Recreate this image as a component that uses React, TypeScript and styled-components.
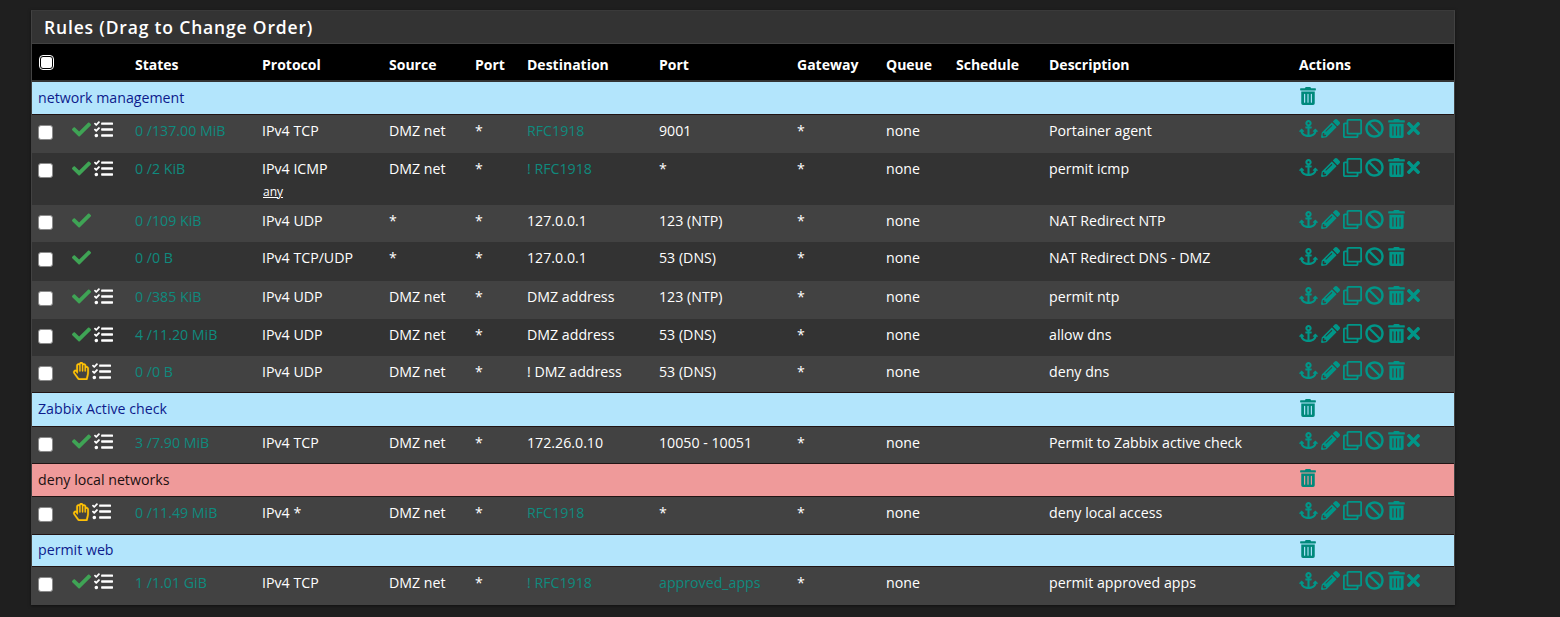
import { createGlobalStyle } from 'styled-components';
import styled from 'styled-components';
import {
  FaAnchor,
  FaBan,
  FaCheck,
  FaPencilAlt,
  FaRegClone,
  FaRegHandPaper,
  FaTasks,
  FaTimes,
  FaTrashAlt,
} from 'react-icons/fa';

const GlobalStyle = createGlobalStyle`
  html, body {
    margin: 0;
    background: #1f1f1f;
  }
  body {
    font-family: "Open Sans", "Noto Sans", sans-serif;
    font-size: 14.2px;
    color: #fff;
  }
`;

const Page = styled.div`
  height: 617px;
  padding: 10px 0 0 31px;
  box-sizing: border-box;
  overflow: hidden;
`;

const Panel = styled.div`
  width: 1422px;
  border: 1px solid #424242;
  border-top-color: #3a3a3a;
  background: #424242;
  box-shadow: 0 1px 3px rgba(0, 0, 0, 0.5);
`;

const PanelTitle = styled.h2`
  margin: 0;
  height: 32px;
  padding-left: 12px;
  background: #333;
  font-size: 17.5px;
  font-weight: 600;
  line-height: 33px;
  letter-spacing: 0.83px;
  color: #fff;
`;

const Table = styled.table`
  width: 1422px;
  table-layout: fixed;
  border-collapse: collapse;
  margin-top: 1px;
`;

const HeadRow = styled.tr`
  height: 37px;
  background: #000;
  border-bottom: 2px solid #333;
`;

const HeadCell = styled.th`
  padding: 5px 0 0 6px;
  vertical-align: middle;
  text-align: left;
  font-size: 14px;
  font-weight: 700;
  color: #fff;
`;

const Row = styled.tr<{ $height: number; $odd: boolean }>`
  height: ${(p) => p.$height}px;
  background: ${(p) => (p.$odd ? '#424242' : '#333333')};
`;

const Cell = styled.td<{ $muted?: boolean }>`
  padding: 6px 0 0 6px;
  vertical-align: top;
  line-height: 20px;
  white-space: nowrap;
  color: ${(p) => (p.$muted ? '#0f8a7e' : '#fff')};
`;

const SeparatorRow = styled.tr<{ $red?: boolean; $height: number }>`
  height: ${(p) => p.$height}px;
  background: ${(p) => (p.$red ? '#ef9a9a' : '#b3e5fc')};
  color: ${(p) => (p.$red ? '#201010' : '#0d1b8c')};
  border-top: 1px solid #211414;
  border-bottom: 1px solid #211414;
`;

const SeparatorCell = styled.td`
  padding: 0 0 0 6px;
  vertical-align: middle;
  line-height: 20px;
`;

const Box = styled.input.attrs({ type: 'checkbox' })`
  appearance: none;
  display: block;
  width: 15px;
  height: 15px;
  margin: 4px 0 0 0;
  border: 1px solid #8a8a8a;
  border-radius: 3px;
  background: #fff;
`;

const HeadBox = styled(Box)`
  margin: -5px 0 0 1px;
  border: 2px solid #000;
  outline: 1.5px solid #fff;
  outline-offset: -1px;
  border-radius: 4px;
`;

const StatusIcons = styled.div<{ $blocked?: boolean }>`
  display: flex;
  align-items: center;
  gap: ${(p) => (p.$blocked ? '2px' : '3px')};
  height: 20px;
  margin-top: -1px;
  svg {
    flex: none;
  }
`;

const Anyone = styled.div`
  margin: 6px 0 0 1px;
  font-size: 12px;
  line-height: 14px;
  text-decoration: underline;
`;

const Actions = styled.div`
  display: flex;
  align-items: center;
  gap: 3px;
  height: 20px;
  margin-top: -2px;
  color: #009688;
  font-size: 19px;
`;

const RemoveIcon = styled(FaTimes)`
  margin-left: -5px;
`;

const SeparatorTrash = styled.div`
  display: flex;
  margin-top: -3px;
  color: #00897b;
  font-size: 18px;
`;

type Rule = {
  height: number;
  action: 'pass' | 'block' | 'plain';
  states: string;
  protocol: string;
  icmp?: string;
  source: string;
  dest: string;
  destMuted?: boolean;
  port: string;
  portMuted?: boolean;
  description: string;
  remove?: boolean;
};

type Entry = { separator: string; red?: boolean; height: number } | Rule;

const entries: Entry[] = [
  { separator: 'network management', height: 33 },
  { height: 39, action: 'pass', states: '0 /137.00 MiB', protocol: 'IPv4 TCP', source: 'DMZ net', dest: 'RFC1918', destMuted: true, port: '9001', description: 'Portainer agent', remove: true },
  { height: 52, action: 'pass', states: '0 /2 KiB', protocol: 'IPv4 ICMP', icmp: 'any', source: 'DMZ net', dest: '! RFC1918', destMuted: true, port: '*', description: 'permit icmp', remove: true },
  { height: 37, action: 'plain', states: '0 /109 KiB', protocol: 'IPv4 UDP', source: '*', dest: '127.0.0.1', port: '123 (NTP)', description: 'NAT Redirect NTP' },
  { height: 39, action: 'plain', states: '0 /0 B', protocol: 'IPv4 TCP/UDP', source: '*', dest: '127.0.0.1', port: '53 (DNS)', description: 'NAT Redirect DNS - DMZ' },
  { height: 38, action: 'pass', states: '0 /385 KiB', protocol: 'IPv4 UDP', source: 'DMZ net', dest: 'DMZ address', port: '123 (NTP)', description: 'permit ntp', remove: true },
  { height: 37, action: 'pass', states: '4 /11.20 MiB', protocol: 'IPv4 UDP', source: 'DMZ net', dest: 'DMZ address', port: '53 (DNS)', description: 'allow dns', remove: true },
  { height: 36, action: 'block', states: '0 /0 B', protocol: 'IPv4 UDP', source: 'DMZ net', dest: '! DMZ address', port: '53 (DNS)', description: 'deny dns' },
  { separator: 'Zabbix Active check', height: 34 },
  { height: 37, action: 'pass', states: '3 /7.90 MiB', protocol: 'IPv4 TCP', source: 'DMZ net', dest: '172.26.0.10', port: '10050 - 10051', description: 'Permit to Zabbix active check', remove: true },
  { separator: 'deny local networks', red: true, height: 33 },
  { height: 38, action: 'block', states: '0 /11.49 MiB', protocol: 'IPv4 *', source: 'DMZ net', dest: 'RFC1918', destMuted: true, port: '*', description: 'deny local access' },
  { separator: 'permit web', height: 32 },
  { height: 38, action: 'pass', states: '1 /1.01 GiB', protocol: 'IPv4 TCP', source: 'DMZ net', dest: '! RFC1918', destMuted: true, port: 'approved_apps', portMuted: true, description: 'permit approved apps', remove: true },
];

const widths = [34, 63, 127, 127, 86, 52, 132, 138, 89, 70, 93, 250, 161];
const headings = ['States', 'Protocol', 'Source', 'Port', 'Destination', 'Port', 'Gateway', 'Queue', 'Schedule', 'Description', 'Actions'];

const RuleStatus = ({ action }: { action: Rule['action'] }): JSX.Element => (
  <StatusIcons $blocked={action === 'block'}>
    {action === 'block' ? (
      <FaRegHandPaper size={18} color="#ffc107" stroke="#ffc107" strokeWidth={6} />
    ) : (
      <FaCheck size={19} color="#3fa455" />
    )}
    {action !== 'plain' && <FaTasks size={19} color="#fff" />}
  </StatusIcons>
);

const App = (): JSX.Element => {
  let striped = false;
  return (
    <Page>
      <GlobalStyle />
      <Panel>
        <PanelTitle>Rules (Drag to Change Order)</PanelTitle>
        <Table>
          <colgroup>
            {widths.map((w, i) => (
              <col key={i} width={w} />
            ))}
          </colgroup>
          <thead>
            <HeadRow>
              <HeadCell>
                <HeadBox />
              </HeadCell>
              <HeadCell />
              {headings.map((h, i) => (
                <HeadCell key={i}>{h}</HeadCell>
              ))}
            </HeadRow>
          </thead>
          <tbody>
            {entries.map((entry, i) => {
              if ('separator' in entry) {
                striped = false;
                return (
                  <SeparatorRow key={i} $red={entry.red} $height={entry.height}>
                    <SeparatorCell colSpan={12}>{entry.separator}</SeparatorCell>
                    <SeparatorCell>
                      <SeparatorTrash>
                        <FaTrashAlt />
                      </SeparatorTrash>
                    </SeparatorCell>
                  </SeparatorRow>
                );
              }
              striped = !striped;
              return (
                <Row key={i} $height={entry.height} $odd={striped}>
                  <Cell>
                    <Box />
                  </Cell>
                  <Cell>
                    <RuleStatus action={entry.action} />
                  </Cell>
                  <Cell $muted>{entry.states}</Cell>
                  <Cell>
                    {entry.protocol}
                    {entry.icmp && <Anyone>{entry.icmp}</Anyone>}
                  </Cell>
                  <Cell>{entry.source}</Cell>
                  <Cell>*</Cell>
                  <Cell $muted={entry.destMuted}>{entry.dest}</Cell>
                  <Cell $muted={entry.portMuted}>{entry.port}</Cell>
                  <Cell>*</Cell>
                  <Cell>none</Cell>
                  <Cell />
                  <Cell>{entry.description}</Cell>
                  <Cell>
                    <Actions>
                      <FaAnchor />
                      <FaPencilAlt />
                      <FaRegClone />
                      <FaBan />
                      <FaTrashAlt />
                      {entry.remove && <RemoveIcon />}
                    </Actions>
                  </Cell>
                </Row>
              );
            })}
          </tbody>
        </Table>
      </Panel>
    </Page>
  );
};

export default App;
